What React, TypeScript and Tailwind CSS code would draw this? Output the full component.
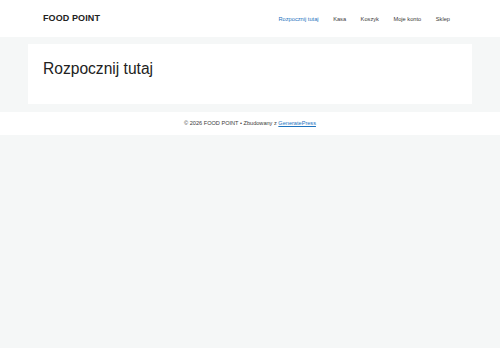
const links = ["Rozpocznij tutaj", "Kasa", "Koszyk", "Moje konto", "Sklep"];

export default function App() {
  return (
    <div className="min-h-[348px] bg-[#f5f7f7] font-['Liberation_Sans',Arial,sans-serif] text-[#222]">
      <header className="h-[37px] bg-white flex items-center justify-between pl-[43px] pr-[50px] pt-[1px]">
        <div className="text-[9px] font-bold tracking-[0.1px] text-[#222]">FOOD POINT</div>
        <nav className="flex items-center gap-[14.5px] text-[5.7px] text-[#3a3a3a]">
          {links.map((l, i) => (
            <span key={l} className={i === 0 ? "text-[#1e73be]" : ""}>
              {l}
            </span>
          ))}
        </nav>
      </header>
      <main className="px-[28px] pt-[7px] pb-[8px]">
        <div className="bg-white h-[60px] px-[15px] pt-[15px]">
          <h1 className="text-[15.6px] leading-[20px] text-[#222]">Rozpocznij tutaj</h1>
        </div>
      </main>
      <footer className="bg-white h-[23px] flex items-center justify-center text-[5.6px] text-[#3a3a3a]">
        <span>
          © 2026 FOOD POINT • Zbudowany z{" "}
          <a className="text-[#1e73be] underline">GeneratePress</a>
        </span>
      </footer>
    </div>
  );
}
